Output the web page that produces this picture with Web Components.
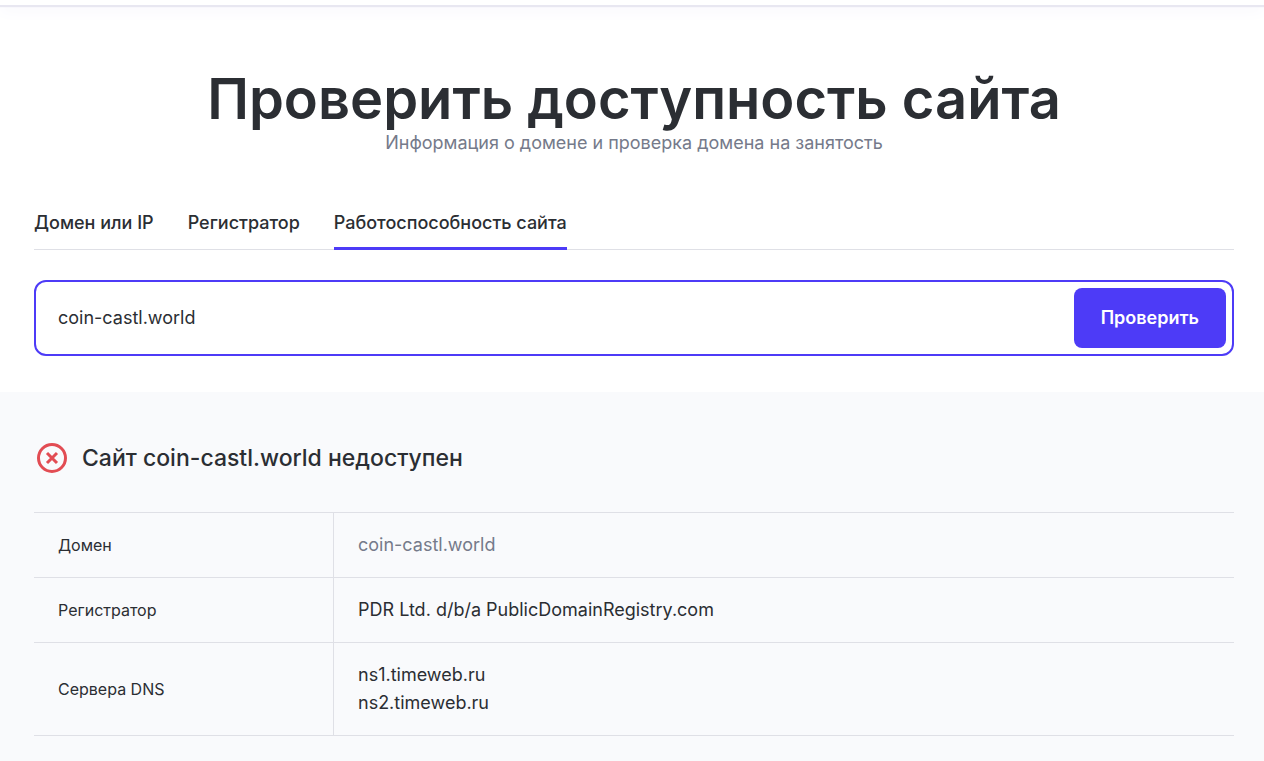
<!DOCTYPE html>
<html lang="ru">
<head>
<meta charset="utf-8">
<meta name="viewport" content="width=device-width, initial-scale=1">
<title>Проверить доступность сайта</title>
<style>
body {
  --accent: #4d3bf7;
  --ink: #2b2e33;
  --muted: #757a8a;
  --line: #dfe0e6;
  --gutter: 0 30px 0 34px;
  margin: 0;
  background: #fff;
  color: var(--ink);
  font: 18px/28px Inter, "Liberation Sans", sans-serif;
}
</style>
</head>
<body>
<site-page>
  <top-bar slot="bar"></top-bar>
  <page-title slot="intro">Проверить доступность сайта<span slot="subtitle">Информация о домене и проверка домена на занятость</span></page-title>
  <tab-list slot="intro">
    <tab-link>Домен или IP</tab-link>
    <tab-link>Регистратор</tab-link>
    <tab-link active>Работоспособность сайта</tab-link>
  </tab-list>
  <domain-form slot="intro" value="coin-castl.world">Проверить</domain-form>
  <status-title slot="result">Сайт coin-castl.world недоступен</status-title>
  <domain-info slot="result"></domain-info>
</site-page>
<script>
const define = (name, html, setup) => customElements.define(name, class extends HTMLElement {
  constructor() {
    super();
    const template = document.createElement('template');
    template.innerHTML = html;
    this.attachShadow({ mode: 'open' }).append(template.content.cloneNode(true));
  }
  connectedCallback() {
    if (setup) setup(this, this.shadowRoot);
  }
});

define('site-page', `
<style>
  :host { display: flex; flex-direction: column; min-height: 100vh; }
  .intro { padding: var(--gutter); }
  .result { flex: 1; padding: var(--gutter); background: #f9fafc; }
</style>
<slot name="bar"></slot>
<main class="intro"><slot name="intro"></slot></main>
<section class="result"><slot name="result"></slot></section>`);

define('top-bar', `
<style>
  :host { display: block; height: 5px; background: #fff; box-shadow: 0 2px 1px #e8e7f1, 0 4px 16px #f0effa; }
</style>`);

define('page-title', `
<style>
  :host { display: block; padding-top: 64px; text-align: center; }
  h1 { margin: 0; font-size: 56px; line-height: 60px; font-weight: 600; }
  p { margin: 0; color: var(--muted); }
</style>
<h1><slot></slot></h1>
<p><slot name="subtitle"></slot></p>`);

define('tab-list', `
<style>
  :host { display: block; margin-top: 48px; }
  nav { display: flex; gap: 34px; box-shadow: inset 0 -1px var(--line); }
</style>
<nav><slot></slot></nav>`);

define('tab-link', `
<style>
  :host { display: block; }
  a { display: block; padding: 4px 0 10px; border-bottom: 3px solid transparent; color: inherit; font-weight: 500; text-decoration: none; }
  :host([active]) a { border-color: var(--accent); }
</style>
<a href="#"><slot></slot></a>`);

define('domain-form', `
<style>
  :host { display: block; padding: 30px 0 36px; }
  form { display: flex; padding: 6px; border: 2px solid var(--accent); border-radius: 12px; background: #fff; }
  input { flex: 1; min-width: 0; margin: 0; padding: 0 16px; border: 0; outline: 0; background: none; color: inherit; font: inherit; }
  button { height: 60px; padding: 0 27px; border: 0; border-radius: 8px; background: var(--accent); color: #fff; font: inherit; font-weight: 600; }
</style>
<form><input type="text" aria-label="Домен"><button type="button"><slot></slot></button></form>`,
(host, root) => { root.querySelector('input').value = host.getAttribute('value'); });

define('status-title', `
<style>
  :host { display: flex; align-items: center; gap: 12px; padding: 48px 0 36px; }
  svg { display: block; flex: none; }
  h2 { margin: 0; font-size: 23px; line-height: 36px; font-weight: 500; }
</style>
<svg width="36" height="36" viewBox="0 0 36 36" fill="none" stroke="#e24c53" stroke-width="3" aria-hidden="true">
  <circle cx="18" cy="18" r="13.5"/>
  <path d="M13 13l10 10M23 13l-10 10"/>
</svg>
<h2><slot></slot></h2>`);

define('domain-info', `
<style>
  :host { display: block; padding-bottom: 24px; }
  table { width: 100%; table-layout: fixed; border-spacing: 0; border-top: 1px solid var(--line); }
  th, td { padding: 18px 24px; border-bottom: 1px solid var(--line); text-align: left; vertical-align: middle; font-weight: 400; }
  th { box-sizing: border-box; width: 300px; border-right: 1px solid var(--line); font-size: 16px; }
  a { color: var(--muted); text-decoration: none; }
</style>
<table>
  <tr><th scope="row">Домен</th><td><a href="#">coin-castl.world</a></td></tr>
  <tr><th scope="row">Регистратор</th><td>PDR Ltd. d/b/a PublicDomainRegistry.com</td></tr>
  <tr><th scope="row">Сервера DNS</th><td>ns1.timeweb.ru<br>ns2.timeweb.ru</td></tr>
</table>`);
</script>
</body>
</html>
